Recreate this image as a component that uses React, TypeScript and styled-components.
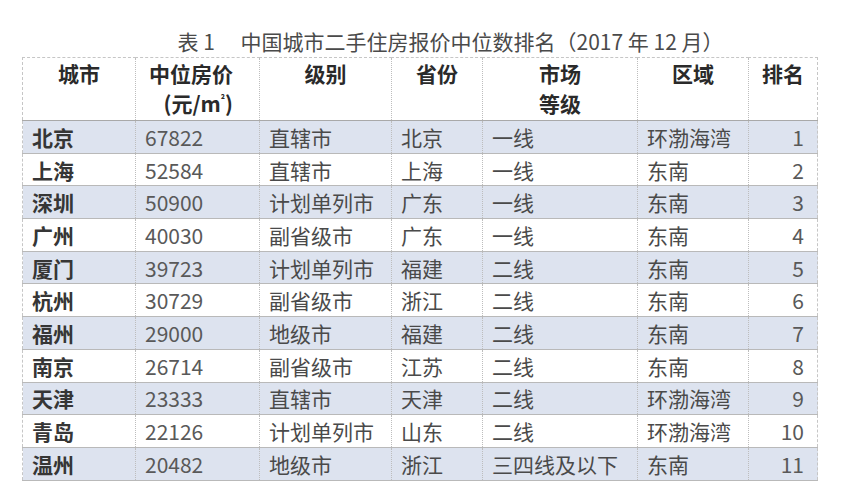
import styled, { createGlobalStyle } from 'styled-components';

interface CityRow {
    city: string;
    price: string;
    level: string;
    province: string;
    tier: string;
    region: string;
    rank: number;
}

const rows: CityRow[] = [
    { city: '北京', price: '67822', level: '直辖市', province: '北京', tier: '一线', region: '环渤海湾', rank: 1 },
    { city: '上海', price: '52584', level: '直辖市', province: '上海', tier: '一线', region: '东南', rank: 2 },
    { city: '深圳', price: '50900', level: '计划单列市', province: '广东', tier: '一线', region: '东南', rank: 3 },
    { city: '广州', price: '40030', level: '副省级市', province: '广东', tier: '一线', region: '东南', rank: 4 },
    { city: '厦门', price: '39723', level: '计划单列市', province: '福建', tier: '二线', region: '东南', rank: 5 },
    { city: '杭州', price: '30729', level: '副省级市', province: '浙江', tier: '二线', region: '东南', rank: 6 },
    { city: '福州', price: '29000', level: '地级市', province: '福建', tier: '二线', region: '东南', rank: 7 },
    { city: '南京', price: '26714', level: '副省级市', province: '江苏', tier: '二线', region: '东南', rank: 8 },
    { city: '天津', price: '23333', level: '直辖市', province: '天津', tier: '二线', region: '环渤海湾', rank: 9 },
    { city: '青岛', price: '22126', level: '计划单列市', province: '山东', tier: '二线', region: '环渤海湾', rank: 10 },
    { city: '温州', price: '20482', level: '地级市', province: '浙江', tier: '三四线及以下', region: '东南', rank: 11 },
];

const columnWidths = [113, 124, 132, 91, 155, 111, 69];

const App = () => {
    return (
      <Page>
        <GlobalStyle />
        <Title>{'表 1　 中国城市二手住房报价中位数排名（2017 年 12 月）'}</Title>
        <Table>
          <colgroup>
            {columnWidths.map((w, i) => <col key={i} width={w} />)}
          </colgroup>
          <thead>
            <tr>
              <HeadCell>城市</HeadCell>
              <HeadCell $align="right">中位房价<br />(元/m<sup>²</sup>)</HeadCell>
              <HeadCell>级别</HeadCell>
              <HeadCell>省份</HeadCell>
              <HeadCell>市场<br />等级</HeadCell>
              <HeadCell>区域</HeadCell>
              <HeadCell>排名</HeadCell>
            </tr>
          </thead>
          <tbody>
            {rows.map((row, i) => (
              <Row key={row.city} $striped={i % 2 === 0}>
                <Cell $strong>{row.city}</Cell>
                <Cell $muted>{row.price}</Cell>
                <Cell>{row.level}</Cell>
                <Cell>{row.province}</Cell>
                <Cell>{row.tier}</Cell>
                <Cell>{row.region}</Cell>
                <Cell $muted $align="right">{row.rank}</Cell>
              </Row>
            ))}
          </tbody>
        </Table>
      </Page>
    )
}

const GlobalStyle = createGlobalStyle`
    html, body {
        margin: 0;
        padding: 0;
        background: #ffffff;
    }
    body {
        font-family: "Noto Sans CJK SC", "Noto Sans", sans-serif;
    }
`

const Page = styled.div`
    width: 795px;
    padding: 26px 0 0 22px;
`

const Title = styled.div`
    height: 31px;
    padding-left: 62px;
    line-height: 31px;
    font-size: 21px;
    color: #4a4a4a;
    text-align: center;
    white-space: pre;
`

const Table = styled.table`
    width: 795px;
    table-layout: fixed;
    border-collapse: collapse;
    border: 1px dashed #c6c6c6;
`

const HeadCell = styled.th<{ $align?: 'right' }>`
    height: 62px;
    padding: 0 ${(props) => props.$align === 'right' ? '26px' : '0'} 0 0;
    vertical-align: top;
    text-align: ${(props) => props.$align ?? 'center'};
    font-size: 21px;
    line-height: 30px;
    font-weight: 700;
    color: #2a2a2a;
    border-left: 1px dotted #bdbdbd;
    border-bottom: 1px solid #a9a9a9;

    sup {
        font-size: 10px;
        line-height: 0;
        vertical-align: 9px;
    }
`

const Row = styled.tr<{ $striped: boolean }>`
    background: ${(props) => props.$striped ? '#dde3ef' : '#ffffff'};
`

const Cell = styled.td<{ $strong?: boolean; $muted?: boolean; $align?: 'right' }>`
    height: 31.7px;
    padding: 0 ${(props) => props.$align === 'right' ? '13px' : '0'} 0 9px;
    text-align: ${(props) => props.$align ?? 'left'};
    font-size: 21px;
    line-height: 30px;
    font-weight: ${(props) => props.$strong ? 700 : 400};
    color: ${(props) => props.$strong ? '#363636' : props.$muted ? '#595959' : '#4a4a4a'};
    white-space: nowrap;
    border-left: 1px dotted #bdbdbd;
    border-bottom: 1px solid #b9b9b9;
`

export default App;
